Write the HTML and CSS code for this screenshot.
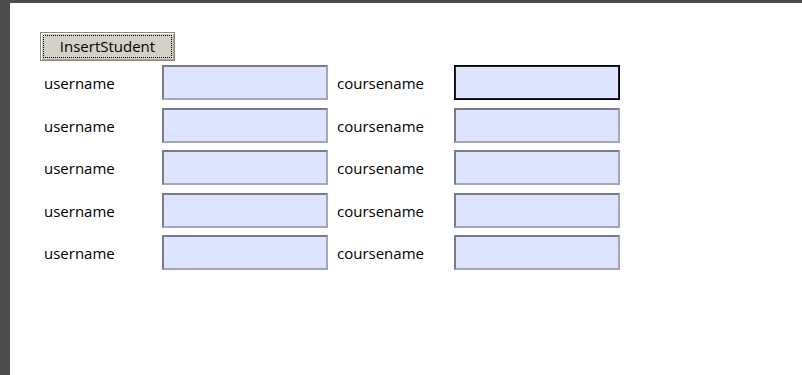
FILE: index.html
```html
<!DOCTYPE html>
<html lang="en">
<head>
    <meta charset="UTF-8">
    <title>InsertStudent</title>
    <link rel="stylesheet" href="styles.css">
</head>
<body>
    <div class="page">
        <button class="insert-btn" type="button"><span>InsertStudent</span></button>

        <div class="form-grid">
            <label class="lbl">username</label>
            <input class="field" type="text">
            <label class="lbl">coursename</label>
            <input class="field active" type="text">

            <label class="lbl">username</label>
            <input class="field" type="text">
            <label class="lbl">coursename</label>
            <input class="field" type="text">

            <label class="lbl">username</label>
            <input class="field" type="text">
            <label class="lbl">coursename</label>
            <input class="field" type="text">

            <label class="lbl">username</label>
            <input class="field" type="text">
            <label class="lbl">coursename</label>
            <input class="field" type="text">

            <label class="lbl">username</label>
            <input class="field" type="text">
            <label class="lbl">coursename</label>
            <input class="field" type="text">
        </div>
    </div>
</body>
</html>
```

FILE: styles.css
```css
html, body {
    margin: 0;
    height: 100%;
}

body {
    background: #4d4d4d;
    padding: 3px 0 0 10px;
    box-sizing: border-box;
    overflow: hidden;
    font-family: 'Open Sans', 'Liberation Sans', sans-serif;
    font-size: 15px;
    color: #000;
}

.page {
    background: #fff;
    height: 100%;
    padding: 29px 0 0 30px;
    box-sizing: border-box;
}

.insert-btn {
    display: block;
    width: 135px;
    height: 29px;
    padding: 2px;
    margin: 0;
    background: #d4d0c8;
    border: 1px solid #8a8782;
    box-shadow: inset 1px 1px 0 #fff, inset -1px -1px 0 #a9a59e;
    font-family: inherit;
    font-size: 15px;
    color: #000;
    box-sizing: border-box;
}

.insert-btn span {
    display: flex;
    align-items: center;
    justify-content: center;
    height: 100%;
    border: 1px dotted #000;
    box-sizing: border-box;
    line-height: 1;
    padding-bottom: 1px;
}

.form-grid {
    display: grid;
    grid-template-columns: 118px 175px 117px 166px;
    grid-auto-rows: 35px;
    row-gap: 7.5px;
    margin: 4px 0 0 4px;
    align-items: center;
}

.lbl {
    line-height: 1;
    padding-top: 2px;
}

.field {
    width: 166px;
    height: 35px;
    margin: 0;
    padding: 0;
    box-sizing: border-box;
    background: #dde4ff;
    border: 2px solid;
    border-color: #7a7a8a #a5a5b5 #a5a5b5 #7a7a8a;
    outline: none;
}

.field.active {
    border: 1px solid #000;
    box-shadow: inset 1px 1px 0 #222, inset -1px -1px 0 #222;
}
```
